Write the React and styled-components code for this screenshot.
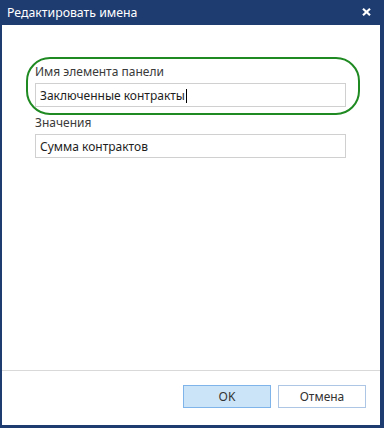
import React, { useState } from "react"
import styled, { createGlobalStyle } from "styled-components"

const GlobalStyle = createGlobalStyle`
  html, body {
    margin: 0;
    padding: 0;
    background: #ffffff;
  }
  * {
    box-sizing: border-box;
  }
`

export default function App() {
  const [name, setName] = useState("Заключенные контракты")
  const [values, setValues] = useState("Сумма контрактов")

  return (
    <>
      <GlobalStyle />
      <Window>
        <TitleBar>
          <Title>Редактировать имена</Title>
          <CloseButton aria-label="Закрыть">
            <svg width="9" height="8" viewBox="0 0 9 8">
              <path d="M1 0.8 L8 7.2 M8 0.8 L1 7.2" stroke="#ffffff" strokeWidth="2.2" />
            </svg>
          </CloseButton>
        </TitleBar>
        <Body>
          <Fields>
            <Field highlighted>
              <Label>Имя элемента панели</Label>
              <Input value={name} onChange={(e) => setName(e.target.value)} />
              <Caret />
            </Field>
            <Field>
              <Label>Значения</Label>
              <Input value={values} onChange={(e) => setValues(e.target.value)} />
            </Field>
          </Fields>
          <Footer>
            <Button primary>OK</Button>
            <Button>Отмена</Button>
          </Footer>
        </Body>
      </Window>
    </>
  )
}

const Window = styled.div`
  width: 384px;
  height: 428px;
  background: #1f3c71;
  display: flex;
  flex-direction: column;
  padding: 0 4px 3px 2px;
  font-family: "Noto Sans", "Open Sans", sans-serif;
`

const TitleBar = styled.div`
  height: 25px;
  display: flex;
  align-items: center;
  justify-content: space-between;
  padding: 0 9px 1px 5px;
`

const Title = styled.div`
  color: #ffffff;
  font-size: 12.3px;
`

const CloseButton = styled.div`
  display: flex;
  align-items: center;
  height: 10px;
  margin-top: -1px;
`

const Body = styled.div`
  flex: 1;
  background: #ffffff;
  display: flex;
  flex-direction: column;
`

const Fields = styled.div`
  display: flex;
  flex-direction: column;
  gap: 8px;
  padding: 39px 0 0 33px;
  width: 344px;
`

const Field = styled.div`
  position: relative;
  display: flex;
  flex-direction: column;
  gap: 3px;

  &::before {
    content: "";
    display: ${(props) => (props.highlighted ? "block" : "none")};
    position: absolute;
    left: -9px;
    top: -7px;
    right: -14px;
    bottom: -8px;
    border: 2px solid #1f8a22;
    border-radius: 24px;
    pointer-events: none;
  }
`

const Label = styled.div`
  font-size: 12px;
  line-height: 16px;
  color: #3a3a3a;
`

const Input = styled.input`
  height: 24px;
  width: 100%;
  border: 1px solid #d0d0d0;
  padding: 0 4px;
  font-family: inherit;
  font-size: 12px;
  color: #1e1e1e;
  outline: none;
  background: #ffffff;
`

const Caret = styled.span`
  position: absolute;
  left: 151px;
  top: 25px;
  width: 1px;
  height: 14px;
  background: #000000;
`

const Footer = styled.div`
  margin-top: auto;
  border-top: 1px solid #d9d9d9;
  display: flex;
  justify-content: flex-end;
  gap: 7px;
  padding: 14px 14px 17px 0;
`

const Button = styled.button`
  width: 88px;
  height: 23px;
  font-family: inherit;
  font-size: 12px;
  color: #333333;
  background: ${(props) => (props.primary ? "#cce4f7" : "#ffffff")};
  border: 1px solid ${(props) => (props.primary ? "#7eb4ea" : "#adc6e5")};
  padding: 0;
`
